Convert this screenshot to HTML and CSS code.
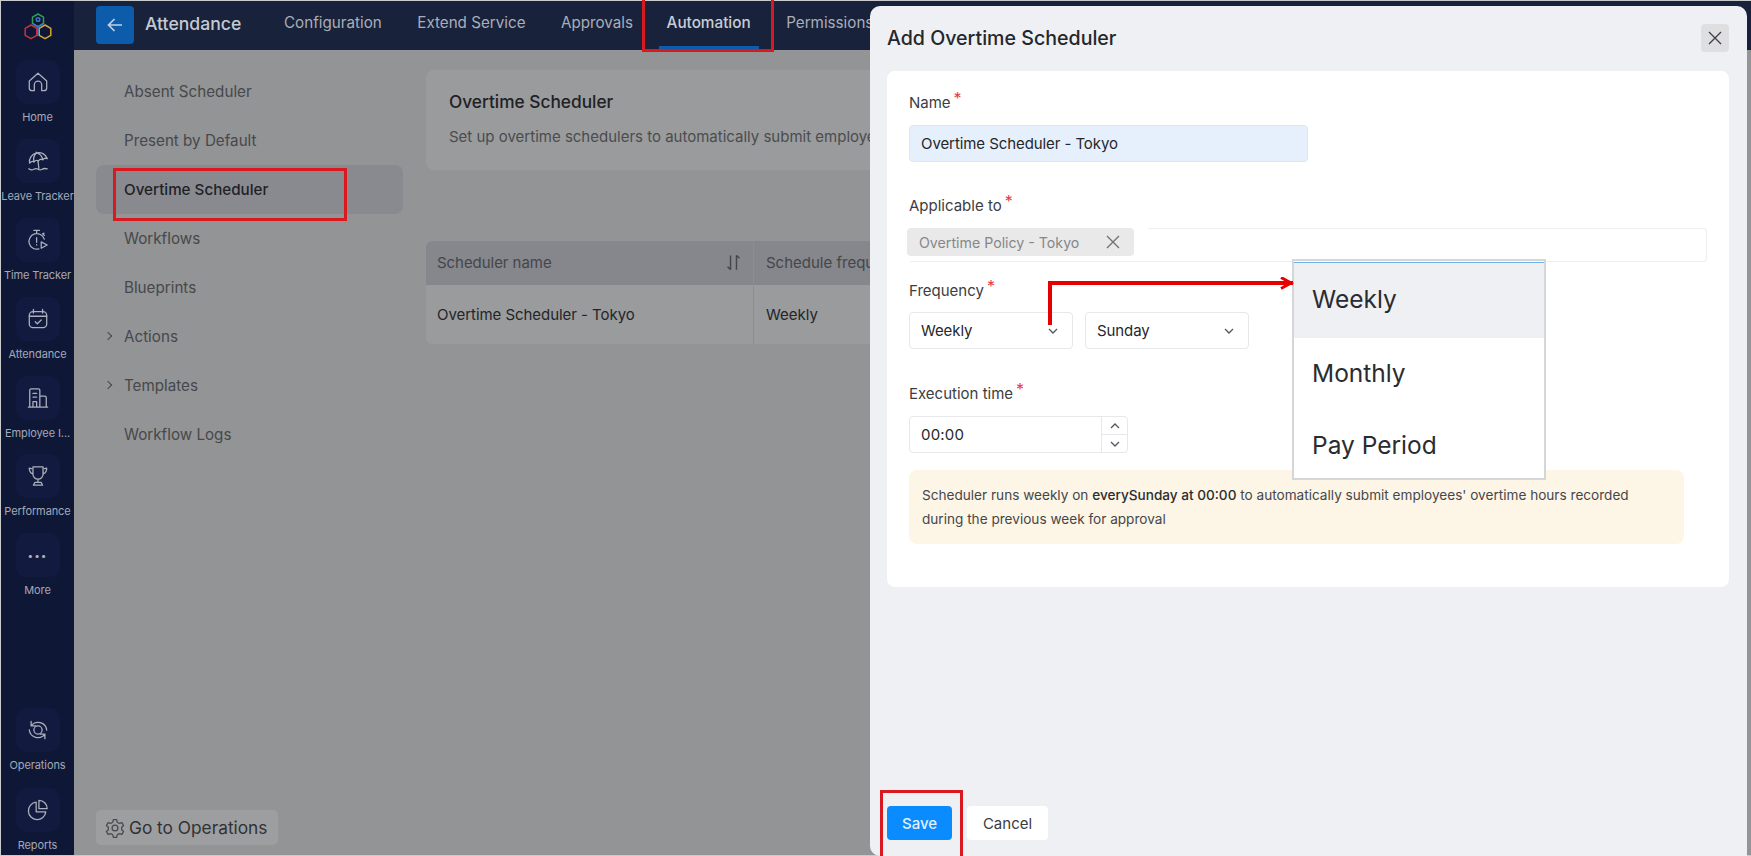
FILE: index.html
```html
<!DOCTYPE html>
<html lang="en">
<head>
<meta charset="utf-8">
<title>Add Overtime Scheduler</title>
<link rel="stylesheet" href="styles.css">
</head>
<body>
<div class="app">
  <aside class="rail">
    <div class="logo">
      <svg width="30" height="30" viewBox="0 0 30 30" fill="none" stroke-width="1.500" stroke-linejoin="round">
        <path d="M15 2l5.500 3.200v6.200L15 14.600l-5.500-3.200V5.200z" stroke="#2f9e5b"/>
        <path d="M8 13l5.800 3.300v7L8 26.700l-5.800-3.400v-7z" stroke="#c4343a"/>
        <path d="M22 13l5.800 3.300v7L22 26.700l-5.800-3.400v-7z" stroke="#d8a72e"/>
        <path d="M10 12l5 3 5-3M15 15v9" stroke="#3b78c4"/>
        <circle cx="15" cy="7.500" r="1.800" stroke="#3b78c4"/>
      </svg>
    </div>
    <div class="rail-item">
      <span class="tile"><svg class="ic" viewBox="0 0 24 24"><path d="M2.500 11 12 2.500 21.500 11v7.500a3 3 0 0 1-3 3H16V15a4 4 0 0 0-8 0v6.500H5.500a3 3 0 0 1-3-3z"/></svg></span>
      <span class="rail-label">Home</span>
    </div>
    <div class="rail-item">
      <span class="tile"><svg class="ic" viewBox="0 0 24 24"><g transform="rotate(-14 12 10)"><path d="M2 12C2.500 6.500 7 3 12 3s9.500 3.500 10 9c-1.700-1.500-4-1.500-5 0-1.200-1.500-3.800-1.500-5 0-1.200-1.500-3.800-1.500-5 0-1-1.500-3.300-1.500-5 0zM7 12c0-4 2-7.500 5-9 3 1.500 5 5 5 9M12 3v-1"/></g><path d="M12 12.500 13 20M2 20.500c2 1.500 4 1.500 5.500.5s3-1 4.500 0 3 1 4.500 0 3.500-1 5.500-.5"/></svg></span>
      <span class="rail-label">Leave Tracker</span>
    </div>
    <div class="rail-item">
      <span class="tile"><svg class="ic" viewBox="0 0 24 24"><path d="M7.500 1.500h6M10.500 1.500V5M17 5l2 2M18.500 4.500l-1 1.500M18.800 11A8.500 8.500 0 1 0 13 21.700M10.500 9.500v5M10.500 17v.5M15.500 14l6.500 3.500-6.500 3.500z"/></svg></span>
      <span class="rail-label">Time Tracker</span>
    </div>
    <div class="rail-item">
      <span class="tile"><svg class="ic" viewBox="0 0 24 24"><rect x="2.500" y="4" width="19" height="17.500" rx="4"/><path d="M7 1.500v4M17 1.500v4M2.500 9h19M9 15l2.200 2.200L15.500 13"/></svg></span>
      <span class="rail-label">Attendance</span>
    </div>
    <div class="rail-item">
      <span class="tile"><svg class="ic" viewBox="0 0 24 24"><path d="M3 22V3.500A1.500 1.500 0 0 1 4.500 2h8A1.500 1.500 0 0 1 14 3.500V22M14 10h5.500a1.500 1.500 0 0 1 1.500 1.500V22M1.500 22h21M6.500 7h4M6.500 11h4M6.500 22v-6h4v6"/></svg></span>
      <span class="rail-label">Employee I...</span>
    </div>
    <div class="rail-item">
      <span class="tile"><svg class="ic" viewBox="0 0 24 24"><path d="M6.500 2h11v8a5.500 5.500 0 0 1-11 0zM5 4 2.500 3.500c0 3.500 1 5 3.500 6M19 4l2.500-.5c0 3.500-1 5-3.500 6M12 15.500V19M8.500 19h7l1.500 3H7z"/></svg></span>
      <span class="rail-label">Performance</span>
    </div>
    <div class="rail-item">
      <span class="tile"><span class="dots">•••</span></span>
      <span class="rail-label">More</span>
    </div>
    <div class="rail-item rail-push">
      <span class="tile"><svg class="ic" viewBox="0 0 24 24"><circle cx="12" cy="12" r="4.500"/><path d="M4.500 2.500v5h5M4.500 7.500A9.500 9.500 0 0 1 21.500 12M19.500 21.500v-5h-5M19.500 16.500A9.500 9.500 0 0 1 2.500 12"/></svg></span>
      <span class="rail-label">Operations</span>
    </div>
    <div class="rail-item">
      <span class="tile"><svg class="ic" viewBox="0 0 24 24"><path d="M10 3.500a9.500 9.500 0 1 0 10.500 10.500H10z"/><path d="M13 1.500a9 9 0 0 1 9 9h-9z"/></svg></span>
      <span class="rail-label">Reports</span>
    </div>
  </aside>

  <div class="main">
    <header class="topbar">
      <button class="back">
        <svg width="20" height="20" viewBox="0 0 20 20" fill="none" stroke="#c3d0e0" stroke-width="1.700"><path d="M17 10H3.500M9.500 4l-6 6 6 6"/></svg>
      </button>
      <span class="app-title">Attendance</span>
      <nav class="tabs">
        <span class="tab">Configuration</span>
        <span class="tab">Extend Service</span>
        <span class="tab">Approvals</span>
        <span class="tab tab-active">Automation</span>
        <span class="tab">Permissions</span>
      </nav>
    </header>
    <div class="body">
      <aside class="subnav">
        <a class="sub">Absent Scheduler</a>
        <a class="sub">Present by Default</a>
        <a class="sub sub-active">Overtime Scheduler</a>
        <a class="sub">Workflows</a>
        <a class="sub">Blueprints</a>
        <a class="sub sub-exp">Actions</a>
        <a class="sub sub-exp">Templates</a>
        <a class="sub">Workflow Logs</a>
        <button class="goto">
          <svg width="20" height="20" viewBox="0 0 24 24" fill="none" stroke="#47494c" stroke-width="1.500" stroke-linejoin="round"><circle cx="12" cy="12" r="3.500"/><path d="M10 2h4l.7 3 2.600 1.500 3-.9 2 3.400-2.300 2.100v3l2.300 2.100-2 3.400-3-.9-2.600 1.500-.7 3h-4l-.7-3-2.600-1.500-3 .9-2-3.400 2.300-2.100v-3L1.700 9l2-3.400 3 .9L9.300 5z"/></svg>
          Go to Operations
        </button>
      </aside>
      <section class="content">
        <div class="intro">
          <h2>Overtime Scheduler</h2>
          <p>Set up overtime schedulers to automatically submit employees' overtime hours for approval.</p>
        </div>
        <div class="table">
          <div class="row head">
            <div class="cell c1">Scheduler name
              <svg class="sort" viewBox="0 0 16 16" fill="none" stroke="#44464a" stroke-width="1.200"><path d="M5.500 2v12M3 11.500 5.500 14M10.500 14V2M10.500 2 13 4.500"/></svg>
            </div>
            <div class="cell">Schedule frequency</div>
          </div>
          <div class="row">
            <div class="cell c1 dark">Overtime Scheduler - Tokyo</div>
            <div class="cell dark">Weekly</div>
          </div>
        </div>
      </section>
    </div>
  </div>

  <div class="modal">
    <div class="modal-head">
      <h1>Add Overtime Scheduler</h1>
      <button class="close">
        <svg width="14" height="14" viewBox="0 0 14 14" fill="none" stroke="#3c3e42" stroke-width="1.300"><path d="M1 1l12 12M13 1 1 13"/></svg>
      </button>
    </div>
    <form class="card">
      <label class="lbl">Name<sup>*</sup></label>
      <div class="field f-name">Overtime Scheduler - Tokyo</div>

      <label class="lbl l-app">Applicable to<sup>*</sup></label>
      <div class="multi">
        <span class="tag">Overtime Policy - Tokyo
          <svg width="14" height="14" viewBox="0 0 14 14" fill="none" stroke="#6d6f72" stroke-width="1.300"><path d="M1 1l12 12M13 1 1 13"/></svg>
        </span>
      </div>

      <label class="lbl l-freq">Frequency<sup>*</sup></label>
      <div class="selects">
        <div class="field sel">Weekly<svg class="chev" viewBox="0 0 12 12"><path d="M2 4l4 4 4-4"/></svg></div>
        <div class="field sel">Sunday<svg class="chev" viewBox="0 0 12 12"><path d="M2 4l4 4 4-4"/></svg></div>
      </div>

      <label class="lbl l-exec">Execution time<sup>*</sup></label>
      <div class="field time">
        <span class="time-val">00:00</span>
        <span class="spin">
          <span class="spin-btn"><svg class="chev" viewBox="0 0 12 12"><path d="M2 8l4-4 4 4"/></svg></span>
          <span class="spin-btn"><svg class="chev" viewBox="0 0 12 12"><path d="M2 4l4 4 4-4"/></svg></span>
        </span>
      </div>

      <div class="note">Scheduler runs weekly on <b>everySunday at 00:00</b> to automatically submit employees' overtime hours recorded during the previous week for approval</div>
    </form>
    <div class="actions">
      <button class="btn save">Save</button>
      <button class="btn cancel">Cancel</button>
    </div>
  </div>

  <ul class="dropdown">
    <li class="opt opt-on">Weekly</li>
    <li class="opt">Monthly</li>
    <li class="opt">Pay Period</li>
  </ul>

  <svg class="arrow" width="256" height="50" viewBox="0 0 256 50" fill="none" stroke="#e60000">
    <path d="M5 48V6H248" stroke-width="4"/>
    <path d="M236 0.500 L246 6 L236 11.500" stroke-width="3"/>
  </svg>
  <span class="mark m-auto"></span>
  <span class="mark m-over"></span>
  <span class="mark m-save"></span>
</div>
</body>
</html>
```
FILE: styles.css
```css
* { box-sizing: border-box; }
html, body { margin: 0; padding: 0; height: 100%; }
body { font-family: Inter, "Noto Sans", "Liberation Sans", sans-serif; background: #c9cacb; overflow: hidden; }
button { font-family: inherit; border: 0; padding: 0; }
h1, h2, p, ul { margin: 0; padding: 0; }

.app { position: relative; width: 1751px; height: 856px; display: flex; padding: 1px 0 1px 1px; overflow: hidden; background: #c9cacb; }

/* left rail */
.rail { width: 73px; flex: none; background: #0f1737; display: flex; flex-direction: column; align-items: center; overflow: hidden; }
.logo { height: 49px; flex: none; display: flex; align-items: center; justify-content: center; padding-top: 2px; }
.rail-item { height: 78.900px; flex: none; padding-top: 10px; display: flex; flex-direction: column; align-items: center; width: 100%; }
.rail-push { margin-top: 95.700px; height: 80px; }
.tile { width: 44px; height: 44px; flex: none; border-radius: 10px; background: #121a3f; display: flex; align-items: center; justify-content: center; }
.ic { width: 22px; height: 22px; fill: none; stroke: #aab0bc; stroke-width: 1.400; stroke-linejoin: round; stroke-linecap: round; }
.dots { color: #aab0bc; font-size: 10px; letter-spacing: 1px; }
.rail-label { margin-top: 6px; font-size: 11px; line-height: 14px; color: #a4a9b5; white-space: nowrap; letter-spacing: -.1px; }

/* main */
.main { flex: 1; min-width: 0; display: flex; flex-direction: column; background: #939495; }
.topbar { height: 49px; flex: none; background: #19223b; display: flex; align-items: center; padding-left: 22px; }
.back { width: 38px; height: 38px; border-radius: 4px; background: #0c5cab; display: flex; align-items: center; justify-content: center; margin-top: -1px; }
.app-title { margin-left: 11px; font-size: 17.600px; font-weight: 500; color: #c6cad2; width: 139px; margin-top: -4px; }
.tabs { display: flex; height: 100%; }
.tab { font-size: 15.200px; color: #a9aeb9; display: flex; align-items: center; padding-bottom: 3px; margin-right: 35.500px; white-space: nowrap; border-bottom: 4px solid transparent; }
.tab-active { color: #c9cdd5; font-weight: 500; font-size: 15.300px; border-bottom-color: #0c5cab; padding: 0 8px 3px; margin: 0 27.500px 0 -10px; }

.body { flex: 1; min-height: 0; display: flex; }
.subnav { width: 352px; flex: none; position: relative; padding: 17px 0 10px 22px; display: flex; flex-direction: column; }
.sub { display: flex; align-items: center; width: 307px; height: 49px; padding-left: 28px; font-size: 15.200px; color: #46484b; border-radius: 8px; position: relative; }
.sub-active { background: #898a90; color: #1f2125; font-weight: 500; }
.sub-exp::before { content: ""; position: absolute; left: 9px; top: 21px; width: 5px; height: 5px; border-top: 1.300px solid #46484b; border-right: 1.300px solid #46484b; transform: rotate(45deg); }
.goto { margin-top: auto; align-self: flex-start; height: 35px; width: 182px; background: #9d9e9f; border-radius: 5px; display: flex; align-items: center; gap: 4px; padding-left: 9px; font-size: 17.300px; color: #303236; }

.content { flex: none; width: 445px; padding-top: 20px; overflow: hidden; }
.intro { width: 1300px; height: 100px; border-radius: 8px; background: #9a9b9c; padding: 21px 23px; }
.intro h2 { font-size: 17.300px; font-weight: 500; line-height: 22px; color: #1f2125; }
.intro p { margin-top: 13px; width: 421px; overflow: hidden; font-size: 15px; line-height: 22px; color: #4a4c4f; white-space: nowrap; }
.table { margin-top: 71px; width: 1300px; border-radius: 6px; overflow: hidden; background: #9a9b9c; }
.row { display: flex; height: 59px; align-items: stretch; }
.row.head { height: 44px; background: #85878c; }
.cell { flex: 1; display: flex; align-items: center; padding: 0 12px 1px; font-size: 15px; color: #44464a; border-left: 1px solid #8c8d91; overflow: hidden; }
.cell.c1 { flex: none; width: 327px; padding: 0 10px 1px 11px; border-left: 0; justify-content: space-between; letter-spacing: -.05px; }
.sort { width: 19px; height: 19px; }
.dark { color: #232529; }

/* modal */
.modal { position: absolute; left: 870px; top: 6px; width: 877px; height: 850px; background: #eef0f4; border-radius: 10px 10px 0 10px; display: flex; flex-direction: column; padding: 0 18px 16px 17px; }
.modal-head { height: 65px; flex: none; display: flex; align-items: center; justify-content: space-between; padding-bottom: 2px; }
.modal-head h1 { font-size: 19.600px; font-weight: 500; color: #25272b; }
.close { width: 28px; height: 28px; border-radius: 4px; background: #dfdfe1; display: flex; align-items: center; justify-content: center; }
.card { height: 516px; flex: none; background: #fff; border-radius: 8px; padding: 20px 22px 0; display: flex; flex-direction: column; align-items: flex-start; }
.lbl { font-size: 15px; line-height: 24px; color: #3b3d41; height: 24px; }
.lbl sup { color: #e8384f; font-size: 16px; line-height: 0; margin-left: 3px; vertical-align: 4px; }
.l-app { margin-top: 32px; }
.l-freq { margin-top: 17px; }
.l-exec { margin-top: 33px; }
.field { margin-top: 10px; height: 37px; border: 1px solid #e6e8ec; border-radius: 4px; display: flex; align-items: center; padding-left: 11px; font-size: 15px; color: #25272b; background: #fff; }
.f-name { width: 399px; background: #e6f0fc; border-color: #dce7f5; letter-spacing: -.08px; }
.multi { margin-top: 10px; margin-left: -2px; width: 800px; height: 34px; position: relative; display: flex; align-items: flex-start; }
.multi::after { content: ""; position: absolute; left: 3px; right: 0; top: 0; bottom: 0; border: 1px solid #eceef1; border-left: 0; border-radius: 0 4px 4px 0; z-index: 0; }
.tag { position: relative; z-index: 1; width: 227px; height: 28px; background: #e9e9e9; border-radius: 4px; display: flex; align-items: center; justify-content: space-between; padding: 0 14px 0 12px; font-size: 14.200px; color: #85878a; box-shadow: 15px -1px 0 0 #fff; }
.selects { display: flex; gap: 12px; }
.sel { width: 164px; margin-top: 9px; position: relative; justify-content: space-between; padding-right: 13px; letter-spacing: -.08px; }
.chev { width: 12px; height: 12px; fill: none; stroke: #54565a; stroke-width: 1.300; }
.time { width: 219px; margin-top: 10px; padding: 0; justify-content: space-between; }
.time-val { padding-left: 11px; letter-spacing: .2px; }
.spin { width: 26px; height: 100%; border-left: 1px solid #e6e8ec; display: flex; flex-direction: column; }
.spin-btn { flex: 1; display: flex; align-items: center; justify-content: center; }
.spin-btn + .spin-btn { border-top: 1px solid #e6e8ec; }
.note { margin-top: 17px; width: 775px; height: 74px; background: #fdf5e6; border-radius: 8px; padding: 13px 30px 13px 13px; font-size: 13.600px; line-height: 24px; color: #45474a; }
.note b { font-weight: 500; color: #2b2d30; }
.actions { margin-top: auto; display: flex; gap: 15px; }
.btn { height: 34px; border-radius: 4px; font-size: 15px; }
.save { width: 65px; background: #0a8cff; color: #e2f0ff; font-weight: 500; }
.cancel { width: 81px; background: #fff; color: #3b3d41; }

/* dropdown */
.dropdown { position: absolute; left: 1292px; top: 259px; width: 254px; height: 221px; list-style: none; background: #fff; border: 2px solid #d5d6d8; }
.dropdown::before { content: ""; display: block; height: 1px; background: #6eb0ec; margin-top: 1px; }
.opt { height: 72.500px; display: flex; align-items: center; padding: 0 0 3px 18px; font-size: 24.500px; color: #2a2c30; }
.opt-on { background: #eff0f3; height: 75px; }

/* annotations */
.arrow { position: absolute; left: 1045px; top: 277px; }
.mark { position: absolute; border: 3px solid #d8191f; }
.m-auto { left: 642px; top: -3px; width: 132px; height: 55px; }
.m-over { left: 113px; top: 168px; width: 234px; height: 53px; }
.m-save { left: 880px; top: 790px; width: 83px; height: 70px; }
```
